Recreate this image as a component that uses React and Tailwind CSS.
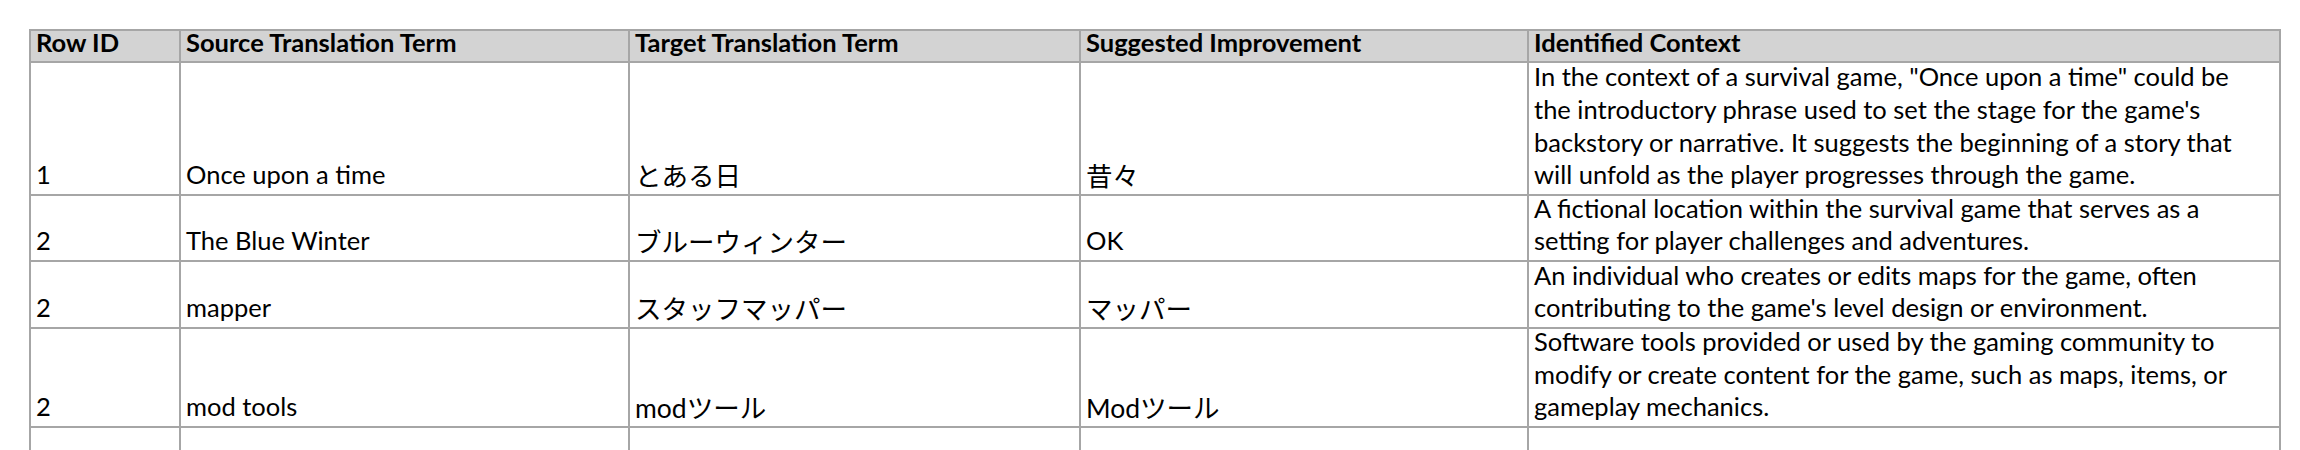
import React from 'react';

const rows = [
  {
    id: '1',
    source: 'Once upon a time',
    target: 'とある日',
    suggested: '昔々',
    context: [
      'In the context of a survival game, "Once upon a time" could be',
      "the introductory phrase used to set the stage for the game's",
      'backstory or narrative. It suggests the beginning of a story that',
      'will unfold as the player progresses through the game.',
    ],
    height: 'h-[131px]',
  },
  {
    id: '2',
    source: 'The Blue Winter',
    target: 'ブルーウィンター',
    suggested: 'OK',
    context: [
      'A fictional location within the survival game that serves as a',
      'setting for player challenges and adventures.',
    ],
    height: 'h-[64px]',
  },
  {
    id: '2',
    source: 'mapper',
    target: 'スタッフマッパー',
    suggested: 'マッパー',
    context: [
      'An individual who creates or edits maps for the game, often',
      "contributing to the game's level design or environment.",
    ],
    height: 'h-[65px]',
  },
  {
    id: '2',
    source: 'mod tools',
    target: 'modツール',
    suggested: 'Modツール',
    context: [
      'Software tools provided or used by the gaming community to',
      'modify or create content for the game, such as maps, items, or',
      'gameplay mechanics.',
    ],
    height: 'h-[97px]',
  },
];

const headers = [
  'Row ID',
  'Source Translation Term',
  'Target Translation Term',
  'Suggested Improvement',
  'Identified Context',
];

const hasJapanese = (s) => /[\u3040-\u30ff\u4e00-\u9fff]/.test(s);

const Cell = ({ children, height, jp }) => (
  <div
    className={`${height} bg-white px-[5px] flex flex-col justify-end ${
      jp ? 'pb-[1px] text-[26.5px]' : 'pb-[3px]'
    }`}
  >
    {children}
  </div>
);

const App = () => {
  return (
    <div className="min-h-screen bg-white pt-[29px] pl-[29px] text-black text-[25.5px] leading-[32.7px] font-['Lato','Noto_Sans_CJK_JP',sans-serif]">
      <div className="w-fit grid grid-cols-[148px_447px_449px_446px_750px] gap-[2px] p-[2px] bg-[#a6a6a6]">
        {/* Header */}
        {headers.map((h) => (
          <div key={h} className="h-[30px] bg-[#d3d3d3] px-[5px] font-bold leading-[22px] whitespace-nowrap">
            {h}
          </div>
        ))}

        {/* Rows */}
        {rows.map((r, i) => (
          <React.Fragment key={i}>
            <Cell height={r.height}><span>{r.id}</span></Cell>
            <Cell height={r.height}><span className="whitespace-nowrap">{r.source}</span></Cell>
            <Cell height={r.height} jp={hasJapanese(r.target)}>
              <span className="whitespace-nowrap">{r.target}</span>
            </Cell>
            <Cell height={r.height} jp={hasJapanese(r.suggested)}>
              <span className="whitespace-nowrap">{r.suggested}</span>
            </Cell>
            <Cell height={r.height}>
              {r.context.map((line, j) => (
                <span key={j} className="block whitespace-nowrap">{line}</span>
              ))}
            </Cell>
          </React.Fragment>
        ))}

        {/* Trailing empty row */}
        {[0, 1, 2, 3, 4].map((k) => (
          <div key={k} className="h-[40px] bg-white"></div>
        ))}
      </div>
    </div>
  );
};

export default App;
